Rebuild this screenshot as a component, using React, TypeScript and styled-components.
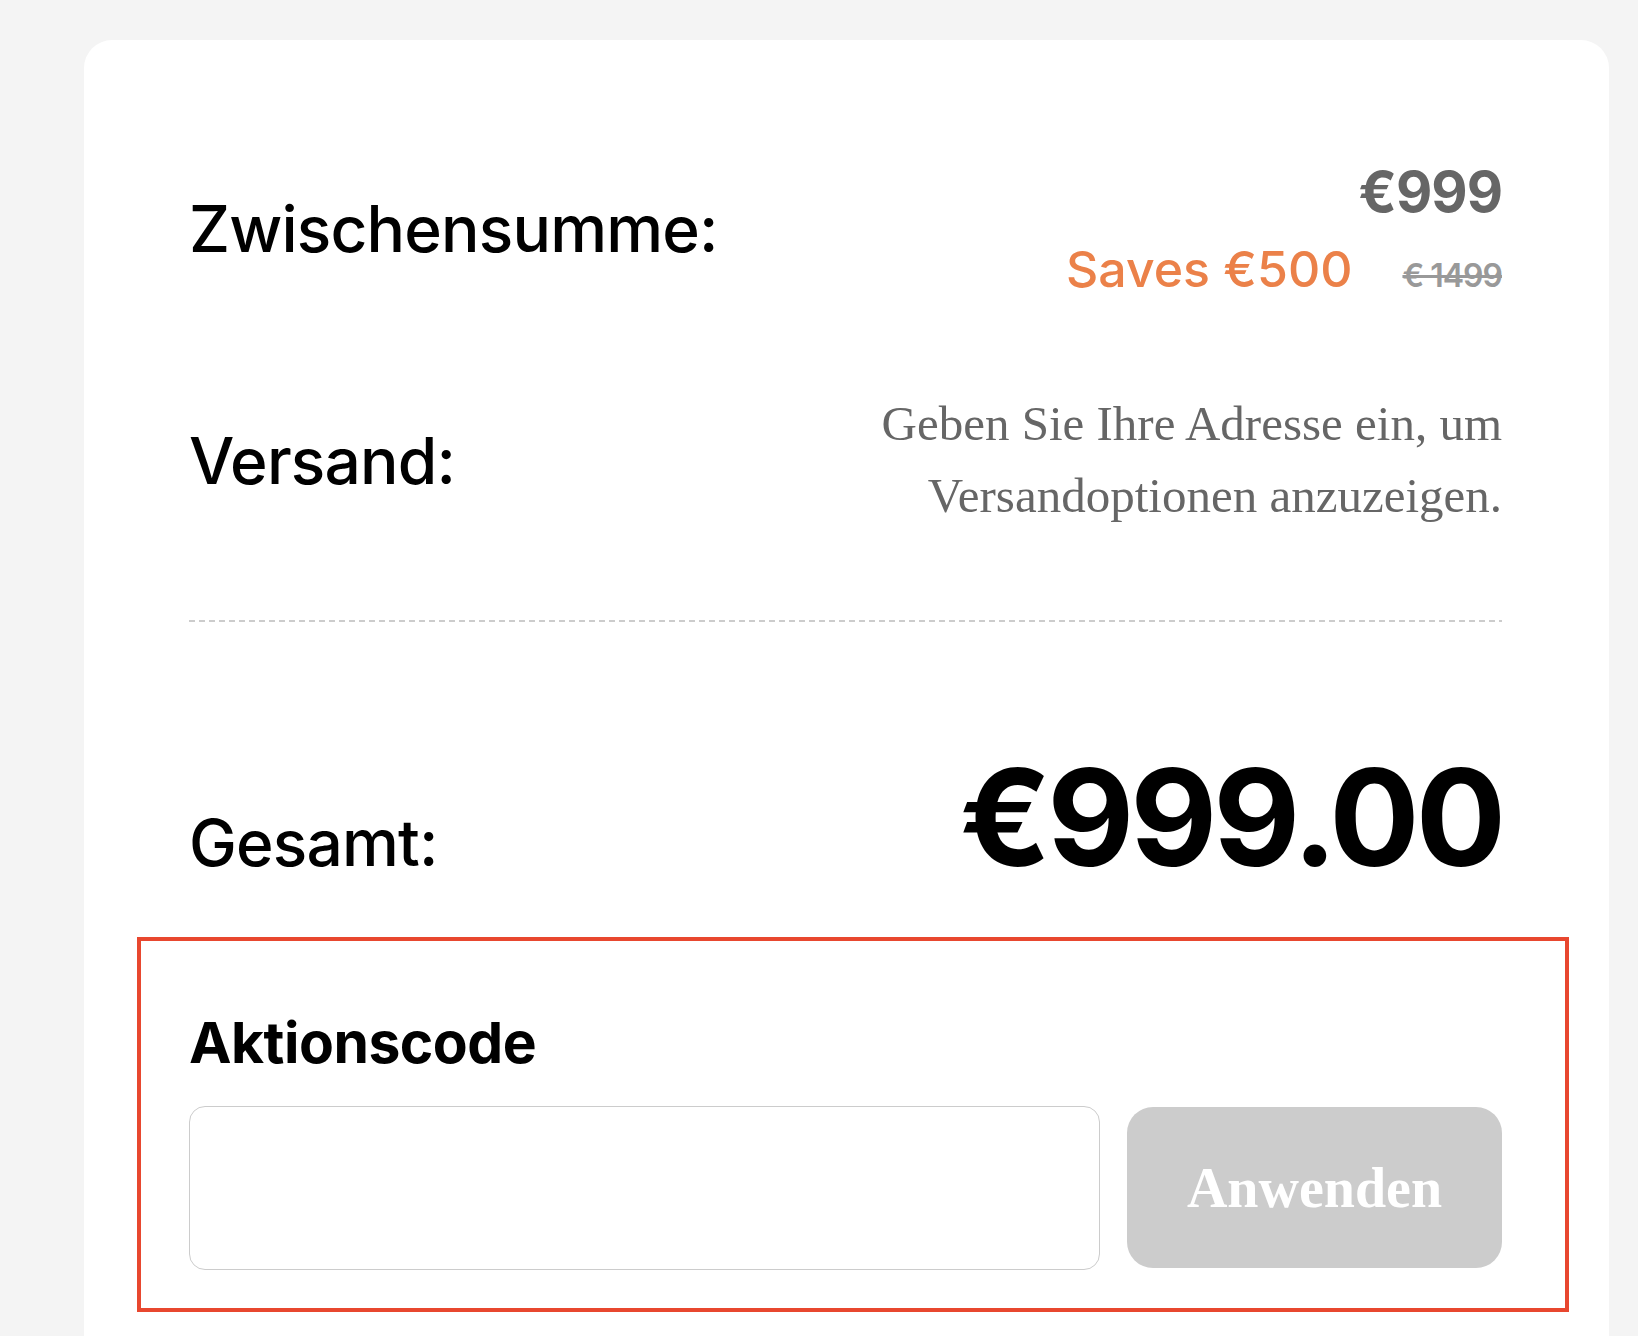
import React from "react";
import styled, { createGlobalStyle } from "styled-components";

const GlobalStyle = createGlobalStyle`
  html, body {
    margin: 0;
    padding: 0;
    background: #f4f4f4;
  }
  body {
    font-family: Inter, "Noto Sans", sans-serif;
    color: #000;
  }
`;

const Page = styled.div`
  min-height: 1336px;
  padding: 40px 29px 0 84px;
  box-sizing: border-box;
`;

const Card = styled.div`
  background: #fff;
  border-radius: 28px 28px 0 0;
  padding: 122px 107px 60px 105px;
  min-height: 1296px;
  box-sizing: border-box;
`;

const Row = styled.div<{ $align?: string }>`
  display: flex;
  justify-content: space-between;
  align-items: ${({ $align }) => $align || "center"};
`;

const Label = styled.div`
  font-size: 64px;
  font-weight: 500;
  line-height: 1.2;
  letter-spacing: -0.8px;
`;

const PriceStack = styled.div`
  display: flex;
  flex-direction: column;
  align-items: flex-end;
  gap: 18px;
`;

const Price = styled.div`
  font-size: 56px;
  font-weight: 700;
  color: #666;
  line-height: 1.1;
  letter-spacing: -1px;
`;

const SaveLine = styled.div`
  display: flex;
  align-items: baseline;
  gap: 50px;
`;

const Saves = styled.span`
  font-size: 50px;
  font-weight: 500;
  color: #eb8149;
  line-height: 1.1;
`;

const OldPrice = styled.s`
  font-size: 32px;
  font-weight: 600;
  color: #999;
  letter-spacing: -1px;
`;

const ShippingRow = styled(Row)`
  margin-top: 95px;
`;

const ShippingNote = styled.div`
  font-family: "Liberation Serif", "Times New Roman", serif;
  font-size: 49px;
  line-height: 72px;
  color: #666;
  text-align: right;
  max-width: 640px;
  margin-top: -4px;
`;

const Divider = styled.div`
  height: 2px;
  margin-top: 88px;
  background-image: linear-gradient(to right, #ccc 6px, transparent 6px);
  background-size: 10px 2px;
  background-repeat: repeat-x;
`;

const TotalRow = styled(Row)`
  margin-top: 128px;
`;

const Total = styled.div`
  font-size: 134px;
  font-weight: 700;
  line-height: 1;
  letter-spacing: -4px;
`;

const Promo = styled.section`
  margin: 53px -67px 0 -52px;
  padding: 68px 63px 38px 48px;
  border: 4px solid #e8472f;
`;

const PromoTitle = styled.h3`
  margin: 0 0 29px;
  font-size: 57px;
  font-weight: 700;
  line-height: 1.2;
  letter-spacing: -0.5px;
`;

const PromoForm = styled.div`
  display: flex;
  gap: 27px;
  align-items: center;
`;

const CodeInput = styled.input`
  flex: 1;
  height: 164px;
  box-sizing: border-box;
  border: 1.5px solid #ccc;
  border-radius: 16px;
  font-size: 40px;
  padding: 0 24px;
  outline: none;
`;

const ApplyButton = styled.button`
  width: 375px;
  height: 161px;
  border: none;
  border-radius: 26px;
  background: #ccc;
  color: #fff;
  font-family: "Liberation Serif", "Times New Roman", serif;
  font-weight: 700;
  font-size: 56px;
  cursor: not-allowed;
`;

const App: React.FC = () => {
  return (
    <>
      <GlobalStyle />
      <Page>
        <Card>
          <Row>
            <Label>Zwischensumme:</Label>
            <PriceStack>
              <Price>€999</Price>
              <SaveLine>
                <Saves>Saves €500</Saves>
                <OldPrice>€ 1499</OldPrice>
              </SaveLine>
            </PriceStack>
          </Row>
          <ShippingRow>
            <Label>Versand:</Label>
            <ShippingNote>
              Geben Sie Ihre Adresse ein, um Versandoptionen anzuzeigen.
            </ShippingNote>
          </ShippingRow>
          <Divider />
          <TotalRow $align="baseline">
            <Label>Gesamt:</Label>
            <Total>€999.00</Total>
          </TotalRow>
          <Promo>
            <PromoTitle>Aktionscode</PromoTitle>
            <PromoForm>
              <CodeInput type="text" />
              <ApplyButton disabled>Anwenden</ApplyButton>
            </PromoForm>
          </Promo>
        </Card>
      </Page>
    </>
  );
};

export default App;
